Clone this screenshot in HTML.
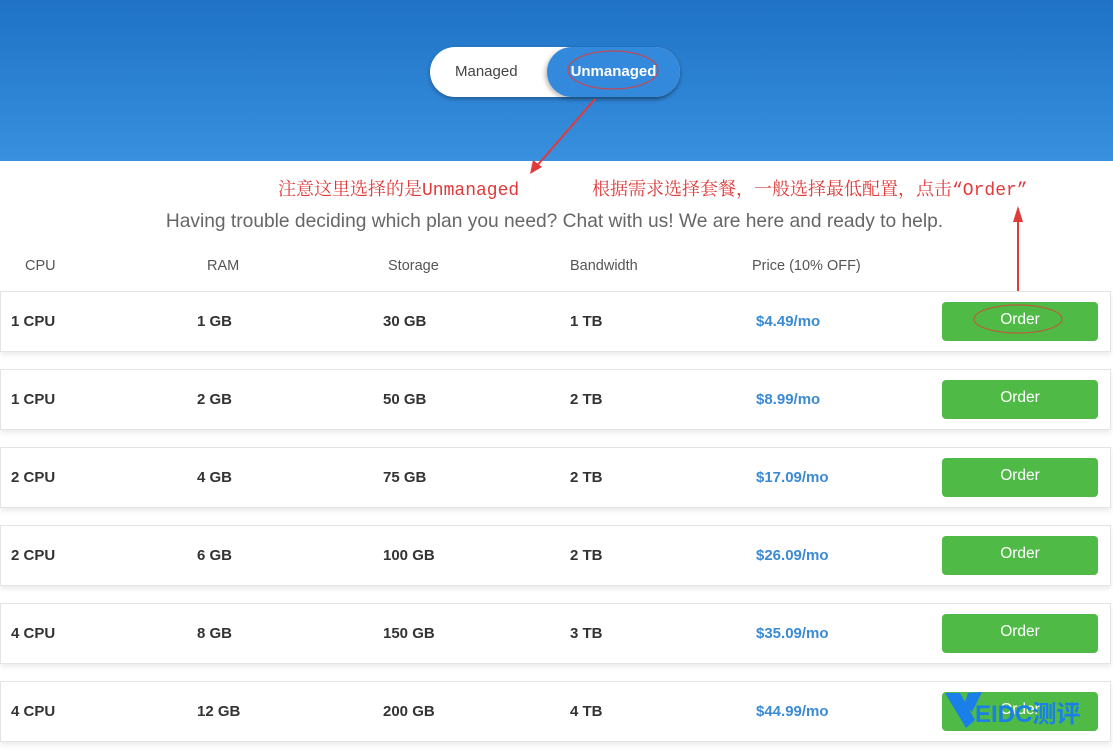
<!DOCTYPE html>
<html><head><meta charset="utf-8"><style>
body{margin:0;width:1113px;height:755px;overflow:hidden;background:#fff;font-family:"Liberation Sans",sans-serif;position:relative}
.hdr{position:absolute;left:0;top:0;width:1113px;height:161px;background:linear-gradient(#1f72c6,#3890de)}
.tog{position:absolute;left:430px;top:47px;width:250px;height:50px;border-radius:25px;background:#fff;box-shadow:0 2px 4px rgba(0,0,0,.3)}
.tog .m{position:absolute;left:25px;top:16px;font-size:15px;color:#444}
.tog .u{position:absolute;left:117px;top:0;width:133px;height:50px;border-radius:25px;background:#3389dc;box-shadow:-2px 2px 4px rgba(0,0,0,.25);color:#fff;font-weight:bold;font-size:15px;line-height:50px;text-align:center}
.note{position:absolute;color:#e03a3a;font-family:"Liberation Mono","Noto Serif CJK SC",serif;font-size:18px;top:175px;white-space:nowrap}
.sub{position:absolute;left:0;width:1109px;text-align:center;top:211px;font-size:19.2px;color:#666}
.th{position:absolute;top:258px;font-size:14.5px;color:#555}
.row{position:absolute;left:0;width:1109px;height:59px;border:1px solid #e4e4e4;background:#fff;box-shadow:0 3px 5px rgba(0,0,0,.08)}
.row span{position:absolute;top:21px;font-size:15px;color:#333;font-weight:bold}
.row .p{color:#3a8ad4}
.btn{position:absolute;left:941px;top:10px;width:156px;height:39px;border-radius:4px;background:#4fbb46;color:#fff;font-size:15.5px;text-align:center;line-height:36px}
</style></head><body>
<div class="hdr"></div>
<div class="tog"><div class="m">Managed</div><div class="u">Unmanaged</div></div>
<svg style="position:absolute;left:0;top:0" width="1113" height="755">
<ellipse cx="613" cy="70" rx="45" ry="19" fill="none" stroke="#c04a55" stroke-width="1.2"/>
<line x1="595" y1="99" x2="535" y2="168" stroke="#e03a3a" stroke-width="2"/>
<polygon points="530,174 533,160 542,167" fill="#e03a3a"/>
<line x1="1018" y1="300" x2="1018" y2="215" stroke="#e03a3a" stroke-width="2"/>
<polygon points="1018,206 1013,222 1023,222" fill="#e03a3a"/>
</svg>
<div class="note" style="left:278px">注意这里选择的是Unmanaged</div>
<div class="note" style="left:592px">根据需求选择套餐，一般选择最低配置，点击“Order”</div>
<div class="sub">Having trouble deciding which plan you need? Chat with us! We are here and ready to help.</div>
<div class="th" style="left:25px">CPU</div><div class="th" style="left:207px">RAM</div><div class="th" style="left:388px">Storage</div><div class="th" style="left:570px">Bandwidth</div><div class="th" style="left:752px">Price (10% OFF)</div>
<div class="row" style="top:291px"><span style="left:10px">1 CPU</span><span style="left:196px">1 GB</span><span style="left:382px">30 GB</span><span style="left:569px">1 TB</span><span class="p" style="left:755px">$4.49/mo</span><div class="btn">Order</div></div>
<div class="row" style="top:369px"><span style="left:10px">1 CPU</span><span style="left:196px">2 GB</span><span style="left:382px">50 GB</span><span style="left:569px">2 TB</span><span class="p" style="left:755px">$8.99/mo</span><div class="btn">Order</div></div>
<div class="row" style="top:447px"><span style="left:10px">2 CPU</span><span style="left:196px">4 GB</span><span style="left:382px">75 GB</span><span style="left:569px">2 TB</span><span class="p" style="left:755px">$17.09/mo</span><div class="btn">Order</div></div>
<div class="row" style="top:525px"><span style="left:10px">2 CPU</span><span style="left:196px">6 GB</span><span style="left:382px">100 GB</span><span style="left:569px">2 TB</span><span class="p" style="left:755px">$26.09/mo</span><div class="btn">Order</div></div>
<div class="row" style="top:603px"><span style="left:10px">4 CPU</span><span style="left:196px">8 GB</span><span style="left:382px">150 GB</span><span style="left:569px">3 TB</span><span class="p" style="left:755px">$35.09/mo</span><div class="btn">Order</div></div>
<div class="row" style="top:681px"><span style="left:10px">4 CPU</span><span style="left:196px">12 GB</span><span style="left:382px">200 GB</span><span style="left:569px">4 TB</span><span class="p" style="left:755px">$44.99/mo</span><div class="btn">Order</div></div>
<svg style="position:absolute;left:0;top:0" width="1113" height="755">
<ellipse cx="1018" cy="319" rx="44" ry="14" fill="none" stroke="#b5613a" stroke-width="1.2"/>
<polygon points="945,693 960,693 975,720 966,728" fill="#1a7fe8"/>
<polygon points="968,693 982,692 972,712 964,705" fill="#1a7fe8"/>
<text x="975" y="722" font-family="Liberation Sans,Noto Sans CJK SC,sans-serif" font-weight="bold" font-size="24" fill="#1a7fe8">EIDC测评</text>
</svg>
</body></html>
